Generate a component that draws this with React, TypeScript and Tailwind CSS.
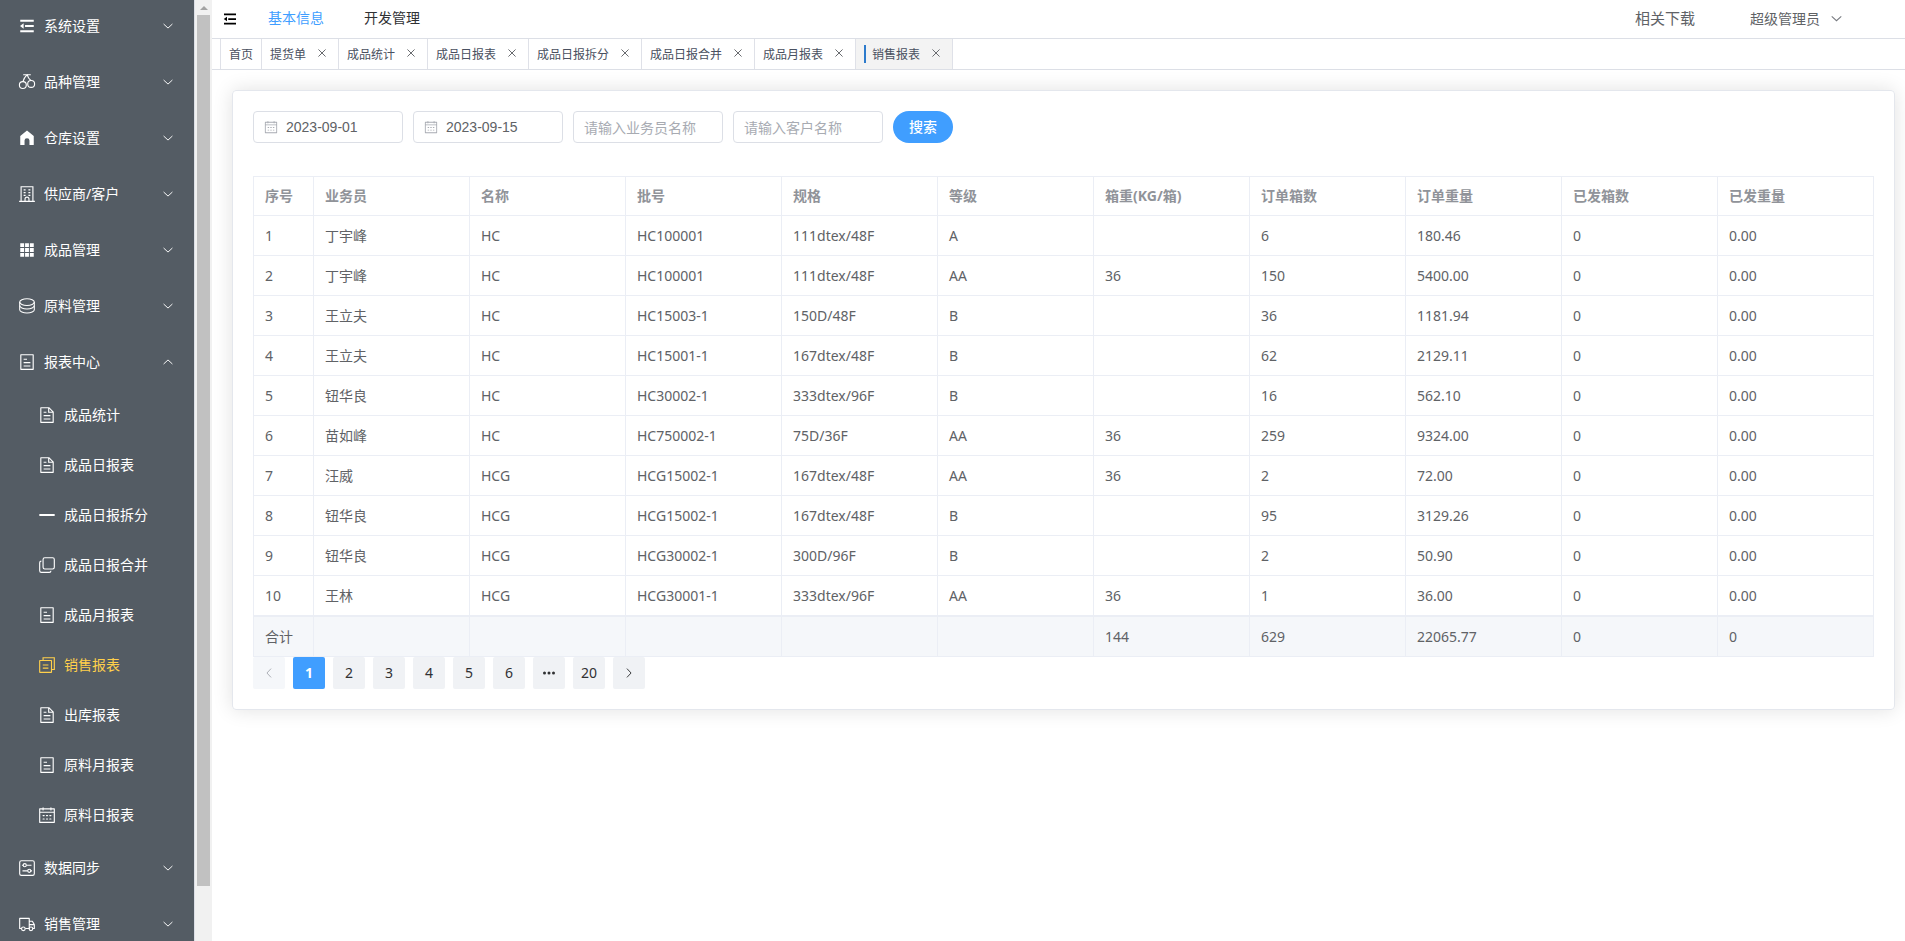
import { useState } from "react";
import type { ReactNode } from "react";

type IconName =
    | "fold" | "cherry" | "home" | "building" | "grid" | "coin" | "tickets" | "document"
    | "minus" | "copy" | "multi" | "date" | "setup" | "truck" | "down" | "up" | "left" | "right" | "close";

const icons: Record<IconName, ReactNode> = {
    fold: (
        <g fill="currentColor">
            <path d="M128 160h768v112H128zM128 752h768v112H128zM400 456h496v112H400z" />
            <path d="M112 512l208-150v300z" />
        </g>
    ),
    cherry: (
        <g fill="none" stroke="currentColor" strokeWidth="64" strokeLinecap="round">
            <path d="M320 96h384M520 96C400 220 310 330 288 480M520 96c30 110 110 250 200 320" />
            <circle cx="276" cy="688" r="196" />
            <circle cx="748" cy="624" r="196" />
        </g>
    ),
    home: <path fill="currentColor" d="M512 90L128 400v490a24 24 0 0 0 24 24h220V660a140 140 0 0 1 280 0v254h220a24 24 0 0 0 24-24V400z" />,
    building: (
        <g fill="none" stroke="currentColor" strokeWidth="64">
            <path d="M176 928V96h672v832M64 928h896M400 928V800a112 112 0 0 1 224 0v128" />
            <path d="M320 272h112M320 432h112M320 592h112M592 272h112M592 432h112M592 592h112" strokeWidth="72" />
        </g>
    ),
    grid: (
        <path fill="currentColor" d="M128 128h220v220H128zM402 128h220v220H402zM676 128h220v220H676zM128 402h220v220H128zM402 402h220v220H402zM676 402h220v220H676zM128 676h220v220H128zM402 676h220v220H402zM676 676h220v220H676z" />
    ),
    coin: (
        <g fill="none" stroke="currentColor" strokeWidth="60">
            <ellipse cx="512" cy="288" rx="416" ry="192" />
            <path d="M96 288v200c0 106 186 192 416 192s416-86 416-192V288" />
            <path d="M96 488v232c0 106 186 192 416 192s416-86 416-192V488" />
        </g>
    ),
    tickets: (
        <path fill="currentColor" d="M192 128v768h640V128H192zm-32-64h704a32 32 0 0 1 32 32v832a32 32 0 0 1-32 32H160a32 32 0 0 1-32-32V96a32 32 0 0 1 32-32zm160 448h384v64H320v-64zm0-192h192v64H320v-64zm0 384h384v64H320v-64z" />
    ),
    document: (
        <path fill="currentColor" d="M832 384H576V128H192v768h640V384zm-26.496-64L640 154.496V320h165.504zM160 64h480l256 256v608a32 32 0 0 1-32 32H160a32 32 0 0 1-32-32V96a32 32 0 0 1 32-32zm160 448h384v64H320v-64zm0-192h160v64H320v-64zm0 384h384v64H320v-64z" />
    ),
    minus: <path stroke="currentColor" strokeWidth="120" strokeLinecap="round" d="M120 512h784" />,
    copy: (
        <g fill="currentColor">
            <path d="M768 832a128 128 0 0 1-128 128H192A128 128 0 0 1 64 832V384a128 128 0 0 1 128-128v64a64 64 0 0 0-64 64v448a64 64 0 0 0 64 64h448a64 64 0 0 0 64-64h64z" />
            <path d="M384 128a64 64 0 0 0-64 64v448a64 64 0 0 0 64 64h448a64 64 0 0 0 64-64V192a64 64 0 0 0-64-64H384zm0-64h448a128 128 0 0 1 128 128v448a128 128 0 0 1-128 128H384a128 128 0 0 1-128-128V192A128 128 0 0 1 384 64z" />
        </g>
    ),
    multi: (
        <g fill="none" stroke="currentColor" strokeWidth="64">
            <rect x="96" y="256" width="672" height="672" rx="16" />
            <path d="M288 256V96h640v672H768M272 512h320M272 688h320" />
        </g>
    ),
    date: (
        <path fill="currentColor" d="M128 384v512h768V192H768v32a32 32 0 1 1-64 0v-32H320v32a32 32 0 0 1-64 0v-32H128v128h768v64H128zm192-256h384V96a32 32 0 1 1 64 0v32h160a32 32 0 0 1 32 32v768a32 32 0 0 1-32 32H96a32 32 0 0 1-32-32V160a32 32 0 0 1 32-32h160V96a32 32 0 0 1 64 0v32zm-32 384h64a32 32 0 0 1 0 64h-64a32 32 0 0 1 0-64zm0 192h64a32 32 0 1 1 0 64h-64a32 32 0 1 1 0-64zm192-192h64a32 32 0 0 1 0 64h-64a32 32 0 0 1 0-64zm0 192h64a32 32 0 1 1 0 64h-64a32 32 0 1 1 0-64zm192-192h64a32 32 0 1 1 0 64h-64a32 32 0 1 1 0-64zm0 192h64a32 32 0 1 1 0 64h-64a32 32 0 1 1 0-64z" />
    ),
    setup: (
        <g fill="none" stroke="currentColor" strokeWidth="64">
            <rect x="96" y="96" width="832" height="832" rx="96" />
            <circle cx="384" cy="352" r="88" />
            <circle cx="640" cy="672" r="88" />
            <path d="M480 352h288M256 672h288M224 352h64M736 672h64" />
        </g>
    ),
    truck: (
        <g fill="none" stroke="currentColor" strokeWidth="64" strokeLinejoin="round">
            <path d="M192 768H96V192h544v576H416M640 352h176l112 192v224h-96M640 544h280" />
            <circle cx="304" cy="784" r="104" />
            <circle cx="736" cy="784" r="104" />
        </g>
    ),
    down: <path fill="none" stroke="currentColor" strokeWidth="80" d="M136 340l376 348 376-348" />,
    up: <path fill="none" stroke="currentColor" strokeWidth="80" d="M136 684l376-348 376 348" />,
    left: <path fill="none" stroke="currentColor" strokeWidth="80" d="M688 136L336 512l352 376" />,
    right: <path fill="none" stroke="currentColor" strokeWidth="80" d="M336 136l352 376-352 376" />,
    close: <path stroke="currentColor" strokeWidth="80" d="M208 208l608 608M816 208L208 816" />,
};

const Icon = ({ name, className }: { name: IconName; className: string }) => (
    <svg viewBox="0 0 1024 1024" className={className} aria-hidden="true">
        {icons[name]}
    </svg>
);

type MenuItem = { label: string; icon: IconName; children?: { label: string; icon: IconName }[] };

const menu: MenuItem[] = [
    { label: "系统设置", icon: "fold" },
    { label: "品种管理", icon: "cherry" },
    { label: "仓库设置", icon: "home" },
    { label: "供应商/客户", icon: "building" },
    { label: "成品管理", icon: "grid" },
    { label: "原料管理", icon: "coin" },
    {
        label: "报表中心",
        icon: "tickets",
        children: [
            { label: "成品统计", icon: "document" },
            { label: "成品日报表", icon: "document" },
            { label: "成品日报拆分", icon: "minus" },
            { label: "成品日报合并", icon: "copy" },
            { label: "成品月报表", icon: "tickets" },
            { label: "销售报表", icon: "multi" },
            { label: "出库报表", icon: "document" },
            { label: "原料月报表", icon: "tickets" },
            { label: "原料日报表", icon: "date" },
        ],
    },
    { label: "数据同步", icon: "setup" },
    { label: "销售管理", icon: "truck" },
];

const tabs = ["首页", "提货单", "成品统计", "成品日报表", "成品日报拆分", "成品日报合并", "成品月报表", "销售报表"];

const columns = ["序号", "业务员", "名称", "批号", "规格", "等级", "箱重(KG/箱)", "订单箱数", "订单重量", "已发箱数", "已发重量"];

const rows = [
    ["1", "丁宇峰", "HC", "HC100001", "111dtex/48F", "A", "", "6", "180.46", "0", "0.00"],
    ["2", "丁宇峰", "HC", "HC100001", "111dtex/48F", "AA", "36", "150", "5400.00", "0", "0.00"],
    ["3", "王立夫", "HC", "HC15003-1", "150D/48F", "B", "", "36", "1181.94", "0", "0.00"],
    ["4", "王立夫", "HC", "HC15001-1", "167dtex/48F", "B", "", "62", "2129.11", "0", "0.00"],
    ["5", "钮华良", "HC", "HC30002-1", "333dtex/96F", "B", "", "16", "562.10", "0", "0.00"],
    ["6", "苗如峰", "HC", "HC750002-1", "75D/36F", "AA", "36", "259", "9324.00", "0", "0.00"],
    ["7", "汪威", "HCG", "HCG15002-1", "167dtex/48F", "AA", "36", "2", "72.00", "0", "0.00"],
    ["8", "钮华良", "HCG", "HCG15002-1", "167dtex/48F", "B", "", "95", "3129.26", "0", "0.00"],
    ["9", "钮华良", "HCG", "HCG30002-1", "300D/96F", "B", "", "2", "50.90", "0", "0.00"],
    ["10", "王林", "HCG", "HCG30001-1", "333dtex/96F", "AA", "36", "1", "36.00", "0", "0.00"],
];

const summary = ["合计", "", "", "", "", "", "144", "629", "22065.77", "0", "0"];

const Sidebar = () => {
    const [active, setActive] = useState("销售报表");

    return (
        <aside className="flex shrink-0 h-full">
            <nav className="w-[194px] h-full overflow-hidden bg-[#545c64] text-white text-sm">
                {/* list is scrolled down a touch */}
                <ul className="-mt-0.5">
                    {menu.map((item) => (
                        <li key={item.label}>
                            <button className="w-full h-14 flex items-center pl-[15px] pr-5">
                                <span className="w-6 mr-[5px] flex justify-center">
                                    <Icon name={item.icon} className="w-[18px] h-[18px]" />
                                </span>
                                {item.label}
                                <Icon name={item.children ? "up" : "down"} className="w-3 h-3 ml-auto" />
                            </button>
                            {item.children && (
                                <ul>
                                    {item.children.map((child) => (
                                        <li key={child.label}>
                                            <button
                                                onClick={() => setActive(child.label)}
                                                className={`w-full h-[50px] flex items-center pl-[35px] ${active === child.label ? "text-[#ffd04b]" : ""}`}
                                            >
                                                <span className="w-6 mr-[5px] flex justify-center">
                                                    <Icon name={child.icon} className="w-[18px] h-[18px]" />
                                                </span>
                                                {child.label}
                                            </button>
                                        </li>
                                    ))}
                                </ul>
                            )}
                        </li>
                    ))}
                </ul>
            </nav>
            {/* Scrollbar */}
            <div className="w-[18px] h-full bg-[#f1f1f1] border-l border-[#dcdfe6] px-0.5 flex flex-col">
                <div className="h-[15px] flex items-center justify-center">
                    <svg viewBox="0 0 8 4" className="w-2 h-1" aria-hidden="true">
                        <path d="M0 4l4-4 4 4z" fill="#a3a3a3" />
                    </svg>
                </div>
                <div className="grow-[871] bg-[#c1c1c1]" />
                <div className="grow-[55]" />
            </div>
        </aside>
    );
};

const Header = () => (
    <header className="h-[39px] shrink-0 border-b border-[#dcdfe6] flex items-center pl-2.5 pr-[62px] text-sm">
        <button aria-label="收起菜单" className="text-black">
            <Icon name="fold" className="w-4 h-4" />
        </button>
        <nav className="flex gap-10 ml-[30px] leading-5 pb-0.5">
            <a href="#base" className="text-[#409eff]">基本信息</a>
            <a href="#dev" className="text-[#303133]">开发管理</a>
        </nav>
        <div className="ml-auto flex items-center text-[#606266]">
            <a href="#download" className="text-[15px] mr-[55px]">相关下载</a>
            <button className="flex items-center gap-2.5">
                超级管理员
                <Icon name="down" className="w-[13px] h-[13px] text-[#76797f]" />
            </button>
        </div>
    </header>
);

const Tabs = () => (
    <div className="h-[31px] shrink-0 border-b border-[#dcdfe6] flex pl-2 text-xs text-[#495060]">
        <div className="flex border-l border-[#dfe1e8]">
            {tabs.map((tab, i) => {
                const current = i === tabs.length - 1;
                return (
                    <div
                        key={tab}
                        className={`flex items-center px-2 border-r border-[#dfe1e8] ${current ? "bg-[#f3f3f3]" : ""}`}
                    >
                        {current && <span className="w-0.5 h-[18px] mr-1.5 bg-[#2d7bcc]" />}
                        <a href={`#${tab}`} className="pt-px">{tab}</a>
                        {i > 0 && (
                            <button aria-label={`关闭${tab}`} className="w-4 ml-2 pb-0.5 flex justify-center text-[#606266]">
                                <Icon name="close" className="w-3 h-3" />
                            </button>
                        )}
                    </div>
                );
            })}
        </div>
    </div>
);

const fieldClass =
    "w-full h-8 rounded border border-[#dcdfe6] bg-white text-sm text-[#606266] placeholder:text-[#a8abb2] outline-none";

const DateField = ({ label, initial }: { label: string; initial: string }) => {
    const [value, setValue] = useState(initial);
    return (
        <label className="relative w-[150px]">
            <Icon name="date" className="absolute left-[11px] top-[9px] w-[14px] h-[14px] text-[#a8abb2]" />
            <input
                aria-label={label}
                value={value}
                onChange={(e) => setValue(e.target.value)}
                className={`${fieldClass} pl-8 pr-2 font-['Liberation_Sans',sans-serif]`}
            />
        </label>
    );
};

const SearchBar = () => (
    <form className="flex gap-2.5" onSubmit={(e) => e.preventDefault()}>
        <DateField label="开始日期" initial="2023-09-01" />
        <DateField label="结束日期" initial="2023-09-15" />
        <div className="w-[150px]">
            <input aria-label="业务员名称" placeholder="请输入业务员名称" className={`${fieldClass} px-2.5`} />
        </div>
        <div className="w-[150px]">
            <input aria-label="客户名称" placeholder="请输入客户名称" className={`${fieldClass} px-2.5`} />
        </div>
        <button type="submit" className="w-[60px] h-8 rounded-full bg-[#409eff] text-white text-sm font-medium">
            搜索
        </button>
    </form>
);

const cellClass = "px-[11px] border-r border-b border-[#ebeef5]";

const ReportTable = () => (
    <table className="mt-[33px] w-full table-fixed border-separate border-spacing-0 border-t border-l border-[#ebeef5] text-sm text-left text-[#606266]">
        <thead className="text-[#909399]">
            <tr className="h-[39px]">
                {columns.map((col, i) => (
                    <th key={col} className={`${cellClass} font-bold ${i === 0 ? "w-[60px]" : ""}`}>{col}</th>
                ))}
            </tr>
        </thead>
        <tbody>
            {rows.map((row) => (
                <tr key={row[0]} className="h-10">
                    {row.map((cell, i) => (
                        <td key={i} className={cellClass}>{cell}</td>
                    ))}
                </tr>
            ))}
        </tbody>
        <tfoot className="bg-[#f5f7fa]">
            <tr className="h-[41px]">
                {summary.map((cell, i) => (
                    <td key={i} className={`${cellClass} border-t`}>{cell}</td>
                ))}
            </tr>
        </tfoot>
    </table>
);

const Pagination = () => {
    const [page, setPage] = useState(1);
    const button = "w-8 h-8 rounded-xs flex items-center justify-center";

    const pageButton = (n: number) => (
        <button
            key={n}
            onClick={() => setPage(n)}
            className={`${button} ${page === n ? "bg-[#409eff] text-white font-bold" : "bg-[#f0f2f5]"}`}
        >
            {n}
        </button>
    );

    return (
        <div className="flex gap-2 text-sm text-[#303133]">
            <button aria-label="上一页" className={`${button} bg-[#f5f7fa] text-[#a8abb2]`}>
                <Icon name="left" className="w-3 h-3" />
            </button>
            {[1, 2, 3, 4, 5, 6].map(pageButton)}
            <button aria-label="更多" className={`${button} bg-[#f0f2f5]`}>
                <svg viewBox="0 0 12 12" className="w-3 h-3" fill="currentColor" aria-hidden="true">
                    <circle cx="1.5" cy="6" r="1.5" />
                    <circle cx="6" cy="6" r="1.5" />
                    <circle cx="10.5" cy="6" r="1.5" />
                </svg>
            </button>
            {pageButton(20)}
            <button aria-label="下一页" className={`${button} bg-[#f0f2f5]`}>
                <Icon name="right" className="w-3 h-3" />
            </button>
        </div>
    );
};

const App = () => {
    return (
        <div className="h-screen flex overflow-hidden bg-white font-['Noto_Sans','Noto_Sans_CJK_SC',sans-serif]">
            <Sidebar />
            <div className="flex-1 min-w-0 flex flex-col">
                <Header />
                <Tabs />
                <main className="flex-1 overflow-hidden pt-5 pl-5 pr-2.5">
                    <section className="p-5 rounded border border-[#e4e7ed] shadow-[0_0_20px_rgba(0,0,0,0.12)]">
                        <SearchBar />
                        <ReportTable />
                        <Pagination />
                    </section>
                </main>
            </div>
        </div>
    );
};

export default App;
